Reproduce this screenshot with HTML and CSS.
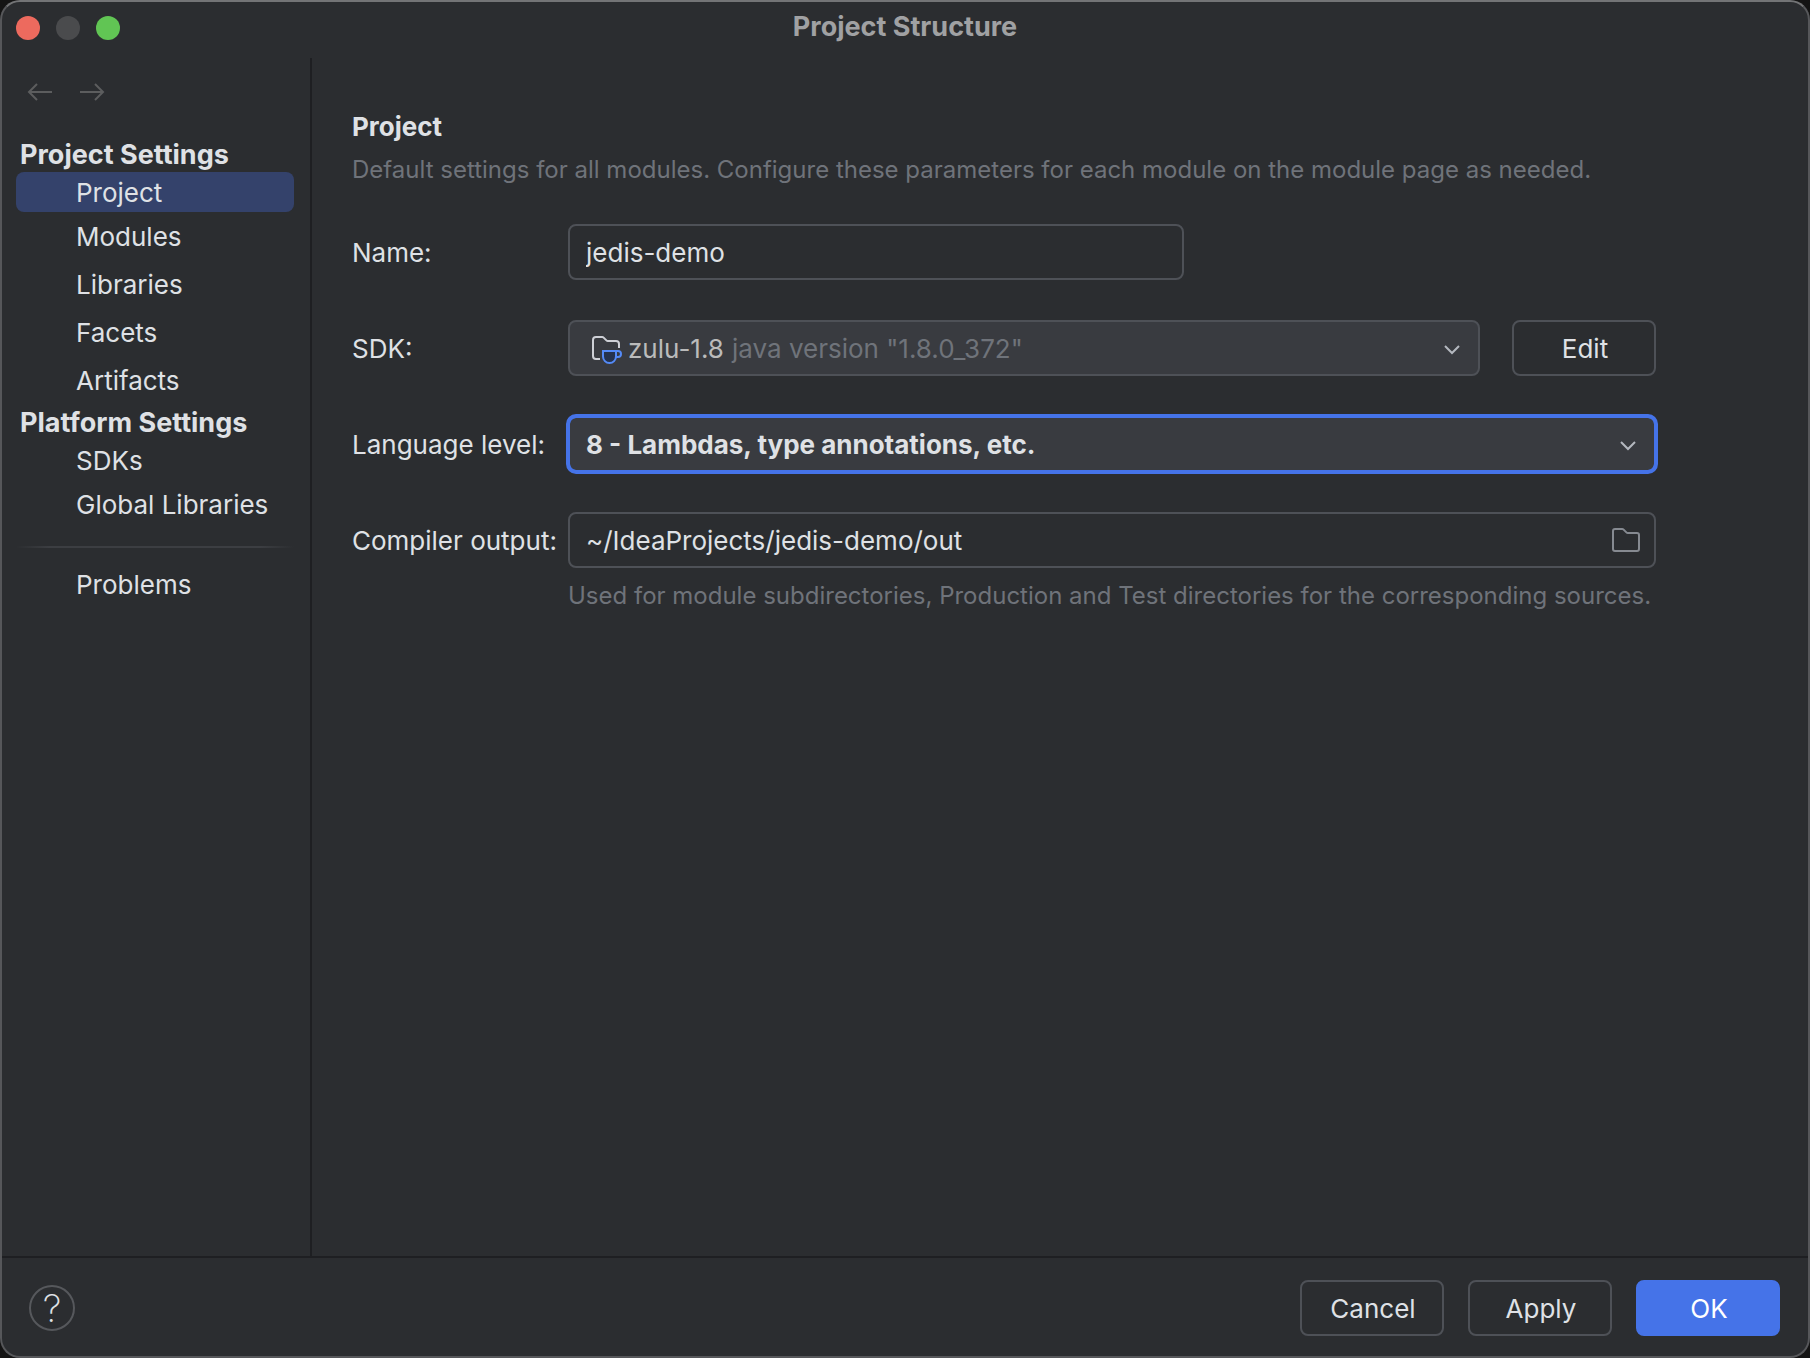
FILE: index.html
```html
<!DOCTYPE html>
<html lang="en">
<head>
  <meta charset="UTF-8" />
  <meta name="viewport" content="width=device-width, initial-scale=1" />
  <title>Project Structure</title>
  <link rel="stylesheet" href="styles.css">
</head>
<body>

  <div class="window">
    <header class="titlebar">
      <div class="lights">
        <button class="light close" type="button" aria-label="Close"></button>
        <button class="light minimize" type="button" aria-label="Minimize" disabled></button>
        <button class="light zoom" type="button" aria-label="Zoom"></button>
      </div>
      <h1>Project Structure</h1>
    </header>

    <div class="body">
      <aside class="sidebar">
        <div class="history">
          <button type="button" aria-label="Back" disabled>
            <svg width="28" height="20" viewBox="0 0 28 20"><path d="M26 10H3M11 2L3 10L11 18"/></svg>
          </button>
          <button type="button" aria-label="Forward" disabled>
            <svg width="28" height="20" viewBox="0 0 28 20"><path d="M2 10H25M17 2L25 10L17 18"/></svg>
          </button>
        </div>

        <nav>
          <h2>Project Settings</h2>
          <a class="first active" href="#project">Project</a>
          <a href="#modules">Modules</a>
          <a href="#libraries">Libraries</a>
          <a href="#facets">Facets</a>
          <a href="#artifacts">Artifacts</a>
          <h2>Platform Settings</h2>
          <a class="first" href="#sdks">SDKs</a>
          <a href="#global-libraries">Global Libraries</a>
          <hr>
          <a href="#problems">Problems</a>
        </nav>
      </aside>

      <main>
        <h2>Project</h2>
        <p class="hint">Default settings for all modules. Configure these parameters for each module on the module page as needed.</p>

        <form id="projectForm">
          <label for="name">Name:</label>
          <div class="field name-field">
            <input type="text" id="name" value="jedis-demo">
          </div>

          <label for="sdk">SDK:</label>
          <div class="sdk-row">
            <div class="field combo">
              <svg class="sdk-icon" width="32" height="32" viewBox="0 0 32 32">
                <path class="folder" d="M10 27H6a3 3 0 0 1-3-3V8a3 3 0 0 1 3-3h6.2a2 2 0 0 1 1.4.6l2.8 2.8a2 2 0 0 0 1.4.6H26a3 3 0 0 1 3 3v4"/>
                <path class="cup" d="M13 19h13v5.500a6.500 6.500 0 0 1-13 0z"/>
                <path class="handle" d="M26 19h2a3 3 0 0 1 0 6h-2"/>
              </svg>
              <select id="sdk">
                <option>zulu-1.8</option>
              </select>
              <span class="version">java version "1.8.0_372"</span>
              <svg class="chevron" width="20" height="12" viewBox="0 0 20 12"><path d="M3 3L10 10L17 3"/></svg>
            </div>
            <button class="btn" type="button">Edit</button>
          </div>

          <label for="level">Language level:</label>
          <div class="field combo focused">
            <select id="level" class="wide">
              <option>8 - Lambdas, type annotations, etc.</option>
            </select>
            <svg class="chevron" width="20" height="12" viewBox="0 0 20 12"><path d="M3 3L10 10L17 3"/></svg>
          </div>

          <label for="output">Compiler output:</label>
          <div class="field">
            <input type="text" id="output" value="~/IdeaProjects/jedis-demo/out">
            <button class="browse" type="button" aria-label="Browse">
              <svg width="32" height="28" viewBox="0 0 32 28"><path d="M5 3h7.200a2 2 0 0 1 1.400.6l2.800 2.800a2 2 0 0 0 1.400.6H27a2 2 0 0 1 2 2v14a2 2 0 0 1-2 2H5a2 2 0 0 1-2-2V5a2 2 0 0 1 2-2z"/></svg>
            </button>
          </div>
          <p class="hint output-hint">Used for module subdirectories, Production and Test directories for the corresponding sources.</p>
        </form>
      </main>
    </div>

    <footer>
      <button class="help" type="button" aria-label="Help">?</button>
      <div class="actions">
        <button class="btn" type="button">Cancel</button>
        <button class="btn" type="button">Apply</button>
        <button class="btn primary" type="submit" form="projectForm">OK</button>
      </div>
    </footer>
  </div>

</body>
</html>
```
FILE: styles.css
```css
* {
  box-sizing: border-box;
}

body {
  margin: 0;
  background: #141414;
  color: #dfe1e5;
  font-family: Inter, sans-serif;
  font-size: 26px;
  line-height: 36px;
}

h1,
h2,
p {
  margin: 0;
  font-size: 26px;
}

button,
input,
select {
  font: inherit;
  color: inherit;
}

svg {
  display: block;
  fill: none;
  stroke-width: 2;
}

.window {
  display: flex;
  flex-direction: column;
  min-height: 100vh;
  background: #2b2d30;
  border: 2px solid #56575a;
  border-top-color: #737476;
  border-radius: 20px;
  overflow: hidden;
}

/* title bar */
.titlebar {
  display: grid;
  grid-template-columns: 1fr auto 1fr;
  align-items: center;
  height: 56px;
  padding: 0 14px 4px;
}

.titlebar h1 {
  padding-bottom: 2px;
  font-size: 27px;
  color: #a0a1a3;
}

.lights {
  display: flex;
  gap: 16px;
}

.light {
  width: 24px;
  height: 24px;
  padding: 0;
  border: none;
  border-radius: 50%;
}

.close {
  background: #ed6a5e;
}

.minimize {
  background: #4a4b4d;
}

.zoom {
  background: #61c554;
}

.body {
  display: flex;
  flex: 1;
}

/* sidebar */
.sidebar {
  width: 310px;
  padding: 24px 16px 24px 14px;
  border-right: 2px solid #1e1f22;
}

.history {
  display: flex;
  gap: 24px;
  padding-left: 10px;
  margin-bottom: 34px;
}

.history button {
  padding: 0;
  border: none;
  background: none;
}

.history svg {
  stroke: #5c5d5e;
}

nav h2 {
  padding: 2px 0 0 4px;
  font-size: 27px;
  line-height: 34px;
}

nav a {
  display: block;
  padding: 2px 0 0 60px;
  line-height: 46px;
  color: inherit;
  text-decoration: none;
  border-radius: 8px;
}

nav a.first {
  line-height: 38px;
}

nav a.active {
  background: #34426b;
}

nav hr {
  height: 2px;
  margin: 18px 0 12px;
  border: none;
  background: linear-gradient(to right, transparent, #3c3e42 12%, #3c3e42 88%, transparent);
}

/* settings panel */
main {
  flex: 1;
  padding: 51px 152px 40px 40px;
}

.hint {
  font-size: 24px;
  color: #6f737a;
}

main > .hint {
  margin: 7px 0 36px;
}

form {
  display: grid;
  grid-template-columns: 216px 1fr;
  row-gap: 40px;
  align-items: center;
}

label,
.version {
  padding-top: 2px;
}

.field {
  display: flex;
  align-items: center;
  min-width: 0;
  height: 56px;
  padding: 0 12px 0 16px;
  border: 2px solid #4e5157;
  border-radius: 8px;
}

.name-field {
  max-width: 616px;
}

.field input {
  flex: 1;
  min-width: 0;
  padding: 2px 0 0;
  border: none;
  outline: none;
  background: none;
}

.combo {
  flex: 1;
  padding-right: 16px;
  background: #393b40;
}

.combo select {
  padding: 2px 0 0;
  border: none;
  outline: none;
  appearance: none;
  background: none;
}

.combo .wide {
  flex: 1;
  font-weight: bold;
}

.focused {
  outline: 4px solid #4573e8;
  outline-offset: -2px;
  border-color: #4573e8;
}

.chevron {
  margin: 2px 0 0 auto;
  stroke: #b4b8bf;
}

.sdk-row {
  display: flex;
  gap: 32px;
}

.sdk-icon {
  margin: 0 6px 0 4px;
}

.folder {
  stroke: #ced0d6;
}

.cup {
  fill: #25324d;
  stroke: #548af7;
}

.handle {
  stroke: #548af7;
}

#sdk {
  color: #bbbbbb;
}

.version {
  margin-left: 8px;
  color: #6f737a;
}

.browse {
  padding: 0;
  border: none;
  background: none;
}

.browse svg {
  stroke: #868a91;
}

.output-hint {
  grid-column: 2;
  margin-top: -30px;
}

.btn {
  width: 144px;
  height: 56px;
  padding: 2px 0 0 2px;
  border: 2px solid #4e5157;
  border-radius: 8px;
  background: none;
}

.primary {
  border-color: #4573e8;
  background: #4573e8;
  color: #fff;
}

/* bottom bar */
footer {
  display: flex;
  align-items: center;
  justify-content: space-between;
  padding: 22px 28px 20px 27px;
  border-top: 2px solid #1e1f22;
}

.help {
  width: 46px;
  height: 46px;
  padding: 0;
  border: 2px solid #56585c;
  border-radius: 50%;
  background: none;
  font-size: 38px;
  font-weight: 200;
}

.actions {
  display: flex;
  gap: 24px;
}
```
